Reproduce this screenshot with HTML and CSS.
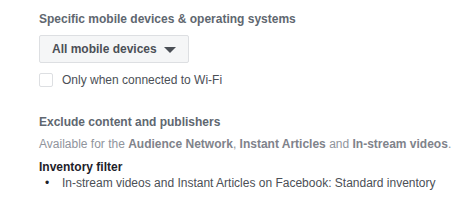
FILE: index.html
```html
<!DOCTYPE html>
<html lang="en">
<head>
    <meta charset="UTF-8">
    <title>Placements</title>
    <link rel="stylesheet" href="styles.css">
</head>
<body>
    <div class="panel">
        <div class="section">
            <div class="section-title">Specific mobile devices &amp; operating systems</div>
            <button class="dropdown">All mobile devices <span class="caret"></span></button>
            <label class="check-row">
                <span class="checkbox"></span>
                <span>Only when connected to Wi-Fi</span>
            </label>
        </div>

        <div class="section exclude">
            <div class="section-title">Exclude content and publishers</div>
            <div class="hint">Available for the <b>Audience Network</b>, <b>Instant Articles</b> and <b>In-stream videos</b>.</div>
            <div class="sub-title">Inventory filter</div>
            <ul class="inventory">
                <li>In-stream videos and Instant Articles on Facebook: Standard inventory</li>
            </ul>
        </div>
    </div>
</body>
</html>
```

FILE: styles.css
```css
* {
    margin: 0;
    padding: 0;
    box-sizing: border-box;
}

body {
    background: #fff;
    font-family: "Liberation Sans", Arial, sans-serif;
    font-size: 12px;
    color: #1d2129;
}

.panel {
    padding: 11px 0 0 39px;
}

.section-title {
    font-weight: bold;
    color: #606770;
    line-height: 16px;
}

.dropdown {
    display: flex;
    align-items: center;
    gap: 7px;
    height: 28px;
    margin-top: 8px;
    padding: 0 12px;
    background: #f5f6f7;
    border: 1px solid #dddfe2;
    border-radius: 2px;
    font-family: inherit;
    font-size: 12px;
    font-weight: bold;
    color: #4b4f56;
}

.caret {
    width: 0;
    height: 0;
    border-left: 6px solid transparent;
    border-right: 6px solid transparent;
    border-top: 6px solid #4b4f56;
    margin-top: 1px;
}

.check-row {
    display: flex;
    align-items: center;
    gap: 9px;
    margin-top: 9px;
    line-height: 16px;
    color: #4b4f56;
}

.checkbox {
    width: 14px;
    height: 14px;
    border: 1px solid #dddfe2;
    border-radius: 2px;
    background: #fff;
}

.exclude {
    margin-top: 26px;
}

.hint {
    margin-top: 6px;
    line-height: 16px;
    color: #90949c;
}

.hint b {
    color: #7f838b;
}

.sub-title {
    margin-top: 7px;
    font-weight: bold;
    line-height: 16px;
    color: #1d2129;
}

.inventory {
    list-style: none;
    line-height: 16px;
    color: #4b4f56;
}

.inventory li::before {
    content: "\2022";
    display: inline-block;
    width: 17px;
    padding-left: 6px;
    color: #1d2129;
}
```
